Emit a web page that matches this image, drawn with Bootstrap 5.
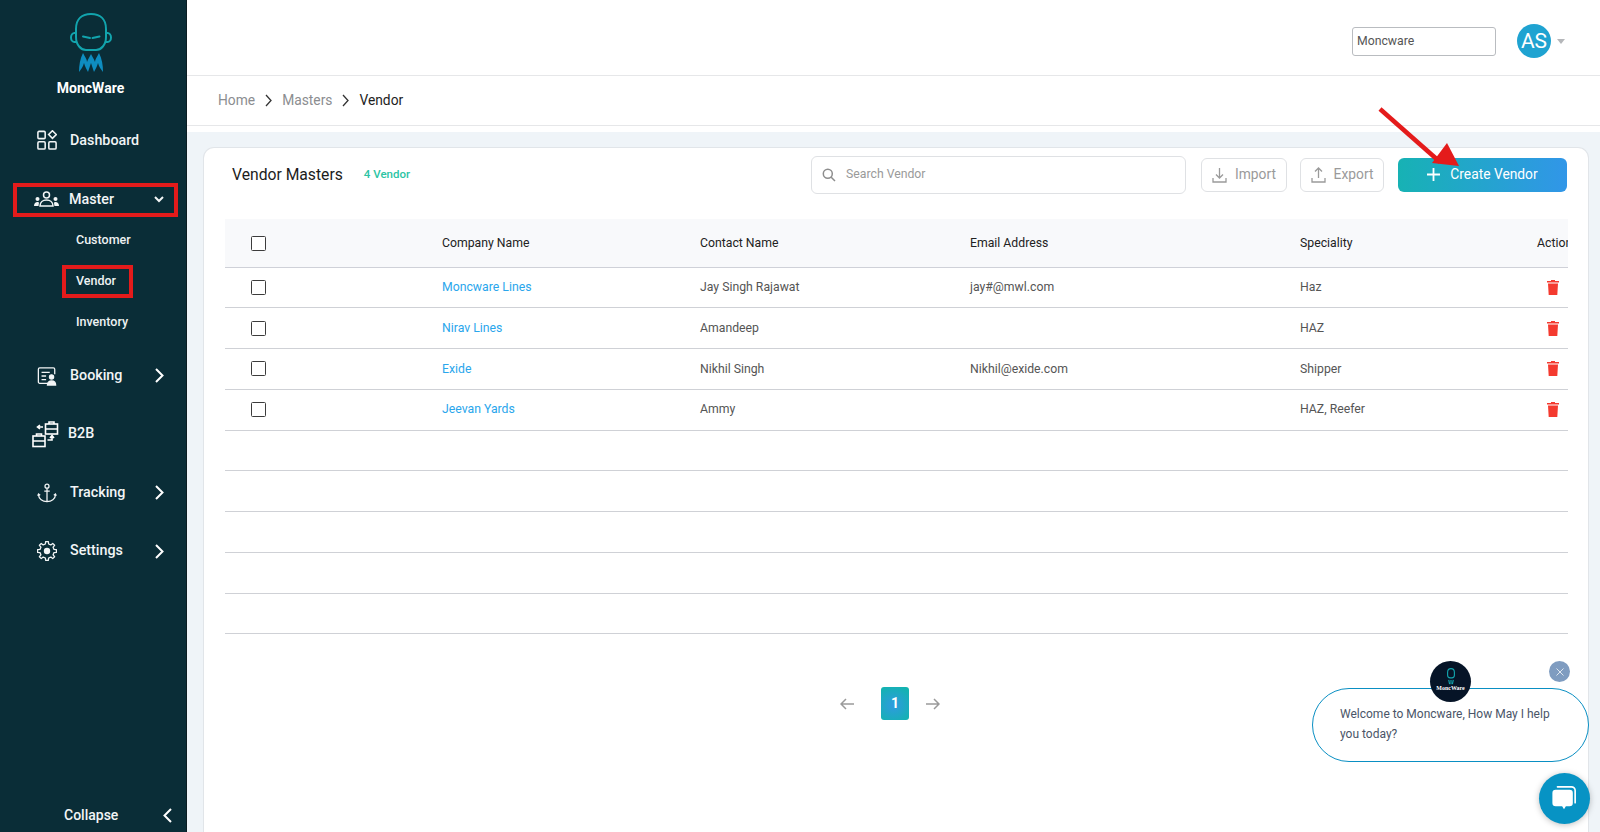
<!DOCTYPE html>
<html lang="en">
<head>
<meta charset="utf-8">
<title>Vendor Masters</title>
<link href="https://cdn.jsdelivr.net/npm/bootstrap@5.3.0/dist/css/bootstrap.min.css" rel="stylesheet">
<style>
html,body{height:832px;overflow:hidden}
body{font-family:Roboto,"Liberation Sans",sans-serif;background:#fff;color:#222}
.shell{height:832px}
.rail{width:187px;flex:none;background:#0a2d37;border-right:1px solid #0b1c22;color:#f2f5f6;height:832px}
.brand{height:111px;padding:13px 5px 0 0}
.brand svg{display:block;width:42px;height:60px}
.brand-name{font-size:14px;font-weight:700;line-height:18px;margin-top:6px;color:#fff}
.rail-item{height:58.5px;padding:0 22px 0 37px;font-size:14.3px;font-weight:500;color:#f2f5f6;text-decoration:none}
.rail-item .ico{width:20px;height:20px;flex:none;margin-right:13px}
.rail-item .chev{width:9px;height:15px;margin-left:auto;margin-right:0}
.rail-item.rail-b2b{padding-left:32px}
.rail-item.rail-b2b .ico{width:27px;height:27px;margin-right:9px}
.rail-open{height:34px;margin:13px 8px 0 13px;padding:0 10px 0 16px;border:4.5px solid #e41b1b;font-size:14.3px;font-weight:500;color:#f2f5f6;text-decoration:none}
.rail-open .ico{width:27px;height:18px;margin-right:9px}
.rail-open .chev{width:10px;height:7px;margin-left:auto}
.rail-subs{padding-top:3.5px;margin-bottom:4px}
.rail-sub{height:40.8px;padding-left:76px;font-size:12.5px;font-weight:500;color:#eef2f3;text-decoration:none}
.rail-sub-mark{margin-left:-14px;padding:0 13px 0 10px;height:33px;border:4.5px solid #e41b1b;line-height:24px}
.rail-foot{margin-top:auto;height:34px;padding:0 14px 0 64px;font-size:14px;font-weight:500;color:#f2f5f6}
.rail-foot svg{width:9px;height:15px;margin-left:auto}
.main-col{min-width:0;height:832px}
.topbar{height:76px;border-bottom:1px solid #e6e7e9;padding:7px 35px 0 0}
.org-input{width:144px;height:29px;font-size:12.25px;padding:0 4px;border:1px solid #b9bcc0;border-radius:3px;color:#555}
.who{width:34px;height:34px;background:#1fa3d1;color:#fff;font-size:21px;line-height:34px;margin-left:21px}
.who-caret{width:0;height:0;border:4.5px solid transparent;border-top:5px solid #b5b7ba;border-bottom:0;margin-left:6px}
.crumbs{height:50px;border-bottom:1px solid #e6e7e9;padding-left:31px;font-size:13.8px;color:#8b8d90}
.crumbs svg{width:7px;height:13px;margin:0 10px}
.crumbs b{font-weight:400;color:#1e1e1e}
.stage{background:#eff4f8;margin-top:6px;padding:15px 11px 0 16px;height:700px}
.sheet{background:#fff;border:1px solid #e1e5e9;border-bottom:0;border-radius:11px 11px 0 0;height:686px;padding:3px 21px 0}
.sheet-head{height:47px;margin-left:7px}
.sheet-title{font-size:15.7px;font-weight:400;color:#1c1c1c}
.sheet-count{font-size:11.5px;font-weight:500;color:#2cc4a4;margin-left:21px}
.find{width:375px;height:38px;border:1px solid #dfe1e4;border-radius:6px;padding:0 10px;margin-left:auto;margin-right:15px}
.find svg{width:14px;height:14px;flex:none;margin-right:8px}
.find input{border:0;outline:0;font-size:12.25px;width:100%;background:transparent}
.find input::placeholder{color:#9a9a9a}
.ghost{height:34px;border:1px solid #dfe1e4;border-radius:6px;font-size:13.8px;color:#9a9a9a;background:#fff;padding:0;margin-right:13px}
.ghost svg{width:15px;height:16px;margin-right:8px}
.ghost-a{width:86px}
.ghost-b{width:84px;margin-right:14px}
.make{width:169px;height:34px;border:0;border-radius:6px;color:#fff;font-size:13.8px;background:linear-gradient(90deg,#17b2b4,#3196e8)}
.make svg{width:13px;height:13px;margin-right:10px}
.grid-wrap{margin-top:21px;overflow:hidden;width:1343px}
.vtable{table-layout:fixed;width:1343px;margin:0;font-size:12.25px;--bs-table-bg:transparent}
.vtable th{background:#f8f9fb;height:48px;font-weight:400;font-size:12.25px;color:#222;vertical-align:middle;padding:1px 0 0;border-bottom:1px solid #cfd1d8;white-space:nowrap}
.vtable td{height:40.75px;padding:0;vertical-align:middle;color:#555;border-bottom:1px solid #cfd1d6}
.vtable a{color:#2aa6ec;text-decoration:none}
.cell-check{padding-left:26px!important}
.form-check-input.box{width:15px;height:15px;margin:0;display:block;border:1.6px solid #3c3c3c;border-radius:1.5px;box-shadow:none}
.bin{width:12px;height:15px;display:block;margin-left:10px}
.pager{margin-top:53px;margin-right:12px}
.pager svg{width:14px;height:12px}
.pg{width:28px;height:33px;border-radius:3px;font-size:14px;font-weight:700;color:#fff;background:radial-gradient(circle at 45% 55%,#2f9ae0 0,#13b3b0 85%);margin:0 17px 0 27px}
.pointer{position:absolute;left:1370px;top:100px;width:100px;height:75px}
.hello{position:absolute;left:1312px;top:688px;width:277px;height:74px;border:1.5px solid #0a8fc3;border-radius:37px;background:#fff;padding:15px 27px 0;font-size:12px;line-height:20px;color:#4a5568}
.hello-logo{position:absolute;left:1430px;top:661px;width:41px;height:41px;background:#061427;color:#fff;font-family:"Liberation Serif",serif;font-weight:700;font-size:6px;line-height:6px}
.hello-logo svg{width:12px;height:17px;margin-top:7px}
.hello-x{position:absolute;left:1549px;top:661px;width:21px;height:21px;background:#7f9cc0}
.hello-x svg{width:8px;height:8px}
.fab{position:absolute;left:1539px;top:773px;width:51px;height:51px;background:#0793c4;box-shadow:0 1px 6px rgba(0,0,0,.25)}
.fab svg{width:26px;height:26px;margin:-2px 2px 0 0}
</style>
</head>
<body>
<div class="shell d-flex">
  <nav class="rail d-flex flex-column">
    <div class="brand d-flex flex-column align-items-center">
      <svg viewBox="0 0 42 60" fill="none">
        <path d="M6 24V16C6 6 12 1 21 1s15 5 15 15v8c0 8-5 13-10 13H16C11 37 6 32 6 24z" stroke="#12a4ad" stroke-width="2"/>
        <path d="M6 20H4.500a3.500 4.500 0 0 0 0 9H7M36 20h1.500a3.500 4.500 0 0 1 0 9H35" stroke="#12a4ad" stroke-width="2"/>
        <path d="M13 23.500l7 1.500M29.500 23.500l-7 1.500" stroke="#12a4ad" stroke-width="2" stroke-linecap="round"/>
        <path d="M9 59C9 52 10 46 13 40c2 4 4 6 4 9 1-3 3-6 4-8 1 2 3 5 4 8 0-3 2-5 4-9 3 6 4 12 4 19-2-3-4-5-5-9-1 4-3 7-4 9-1-3-2-6-3-9-1 3-2 6-3 9-1-2-3-5-4-9-1 4-3 6-5 9z" fill="#0e8dc0"/>
      </svg>
      <div class="brand-name">MoncWare</div>
    </div>
    <a class="rail-item d-flex align-items-center" href="#">
      <svg class="ico" viewBox="0 0 22 22" fill="none" stroke="#f2f5f6" stroke-width="1.700"><rect x="1" y="1.500" width="8" height="8" rx="1.200"/><rect x="1" y="13" width="8" height="8" rx="1.200"/><rect x="13" y="13" width="8" height="8" rx="1.200"/><path d="M17 .8l4.200 4.200-4.200 4.200L12.800 5z"/></svg>
      Dashboard
    </a>
    <a class="rail-open d-flex align-items-center" href="#">
      <svg class="ico" viewBox="0 0 27 18" fill="#f2f5f6"><circle cx="13.500" cy="4" r="3" fill="none" stroke="#f2f5f6" stroke-width="1.500"/><path d="M7 15c0-4 3-6 6.500-6s6.500 2 6.500 6z" fill="none" stroke="#f2f5f6" stroke-width="1.500"/><circle cx="4.500" cy="8" r="2"/><path d="M1 15c0-2.500 1.500-4 3.500-4S6 12 5.500 15z"/><circle cx="22.500" cy="8" r="2"/><path d="M26 15c0-2.500-1.500-4-3.500-4S21 12 21.500 15z"/></svg>
      Master
      <svg class="chev" viewBox="0 0 10 7" fill="none" stroke="#f2f5f6" stroke-width="2"><path d="M1 1l4 4 4-4"/></svg>
    </a>
    <div class="rail-subs d-flex flex-column">
      <a class="rail-sub d-flex align-items-center" href="#">Customer</a>
      <a class="rail-sub d-flex align-items-center" href="#"><span class="rail-sub-mark">Vendor</span></a>
      <a class="rail-sub d-flex align-items-center" href="#">Inventory</a>
    </div>
    <a class="rail-item d-flex align-items-center" href="#">
      <svg class="ico" viewBox="0 0 22 22" fill="none" stroke="#f2f5f6" stroke-width="1.400"><path d="M12 19H3a1.500 1.500 0 0 1-1.500-1.500v-14A1.500 1.500 0 0 1 3 2h15a1.500 1.500 0 0 1 1.500 1.500V9"/><path d="M5 7h9M5 11h5M5 15h5"/><circle cx="16" cy="12" r="2.300" fill="#f2f5f6"/><path d="M11.500 21c0-3 2-4.500 4.500-4.500s4.500 1.500 4.500 4.500z" fill="#f2f5f6"/></svg>
      Booking
      <svg class="chev" viewBox="0 0 9 15" fill="none" stroke="#fff" stroke-width="2"><path d="M1 1l6.500 6.500L1 14"/></svg>
    </a>
    <a class="rail-item rail-b2b d-flex align-items-center" href="#">
      <svg class="ico" viewBox="0 0 27 27" fill="none" stroke="#fff" stroke-width="1.600"><rect x="13.500" y="3" width="12" height="10" fill="#0a2d37"/><path d="M17 3V1h5v2M13.500 8h12"/><rect x="1" y="15" width="12" height="10.500" fill="#0a2d37"/><path d="M4.500 15v-2h5v2M1 20h12"/><path d="M11 6H6M8 4L5.500 6 8 8M15.500 19H20v-4M18 17l2-2.500 2 2.500"/></svg>
      B2B
    </a>
    <a class="rail-item d-flex align-items-center" href="#">
      <svg class="ico" viewBox="0 0 22 22" fill="none" stroke="#f2f5f6" stroke-width="1.400"><circle cx="11" cy="3.500" r="2.200"/><path d="M11 5.700V20.500M8 9h6M1.500 12.500C2 17.500 6 20.500 11 20.500s9-3 9.500-8M.8 14l.9-2 1.800 1.400M21.200 14l-.9-2-1.800 1.400"/></svg>
      Tracking
      <svg class="chev" viewBox="0 0 9 15" fill="none" stroke="#fff" stroke-width="2"><path d="M1 1l6.500 6.500L1 14"/></svg>
    </a>
    <a class="rail-item d-flex align-items-center" href="#">
      <svg class="ico" viewBox="0 0 20 20" fill="none" stroke="#f2f5f6" stroke-width="1.300" stroke-linejoin="round"><path d="M8.380 2.990L8.680.59h2.640l.3 2.400 2.200.9 1.900-1.480 1.870 1.870-1.480 1.900.9 2.200 2.400.3v2.640l-2.400.3-.9 2.200 1.480 1.900-1.870 1.870-1.900-1.480-2.200.9-.3 2.400H8.680l-.3-2.400-2.200-.9-1.900 1.480-1.870-1.870 1.480-1.900-.9-2.200-2.400-.3V8.680l2.400-.3.9-2.200-1.480-1.900 1.870-1.870 1.900 1.480z"/><circle cx="10" cy="10" r="3.200" fill="#f2f5f6" stroke="none"/></svg>
      Settings
      <svg class="chev" viewBox="0 0 9 15" fill="none" stroke="#fff" stroke-width="2"><path d="M1 1l6.500 6.500L1 14"/></svg>
    </a>
    <div class="rail-foot d-flex align-items-center">
      Collapse
      <svg viewBox="0 0 9 15" fill="none" stroke="#fff" stroke-width="2"><path d="M8 1L1.500 7.500 8 14"/></svg>
    </div>
  </nav>

  <div class="main-col flex-grow-1 d-flex flex-column">
    <header class="topbar d-flex align-items-center justify-content-end">
      <input class="org-input" type="text" value="Moncware" aria-label="Organisation">
      <div class="who rounded-circle text-center">AS</div>
      <span class="who-caret"></span>
    </header>
    <div class="crumbs d-flex align-items-center">
      Home
      <svg viewBox="0 0 7 13" fill="none" stroke="#333" stroke-width="1.300"><path d="M1 1l5 5.500L1 12"/></svg>
      Masters
      <svg viewBox="0 0 7 13" fill="none" stroke="#333" stroke-width="1.300"><path d="M1 1l5 5.500L1 12"/></svg>
      <b>Vendor</b>
    </div>
    <main class="stage">
      <section class="sheet">
        <div class="sheet-head d-flex align-items-center">
          <span class="sheet-title">Vendor Masters</span>
          <span class="sheet-count">4 Vendor</span>
          <label class="find d-flex align-items-center">
            <svg viewBox="0 0 14 14" fill="none" stroke="#8d8d8d" stroke-width="1.500"><circle cx="5.800" cy="5.800" r="4.500"/><path d="M9.200 9.200L13 13"/></svg>
            <input type="text" placeholder="Search Vendor" aria-label="Search Vendor">
          </label>
          <button class="btn ghost ghost-a d-flex align-items-center justify-content-center">
            <svg viewBox="0 0 15 16" fill="none" stroke="#9a9a9a" stroke-width="1.300"><path d="M7.500 1v9.500M4 7.500l3.500 3.500L11 7.500M1 11v4h13v-4"/></svg>Import
          </button>
          <button class="btn ghost ghost-b d-flex align-items-center justify-content-center">
            <svg viewBox="0 0 15 16" fill="none" stroke="#9a9a9a" stroke-width="1.300"><path d="M7.500 11V1.500M4 4.500L7.500 1 11 4.500M1 11v4h13v-4"/></svg>Export
          </button>
          <button class="btn make d-flex align-items-center justify-content-center">
            <svg viewBox="0 0 13 13" fill="none" stroke="#fff" stroke-width="1.800"><path d="M6.500 0v13M0 6.500h13"/></svg>Create Vendor
          </button>
        </div>
        <div class="grid-wrap">
          <table class="table vtable">
            <colgroup><col style="width:217px"><col style="width:258px"><col style="width:270px"><col style="width:330px"><col style="width:237px"><col style="width:31px"></colgroup>
            <thead>
              <tr><th class="cell-check"><input class="form-check-input box" type="checkbox" aria-label="Select all"></th><th>Company Name</th><th>Contact Name</th><th>Email Address</th><th>Speciality</th><th>Action</th></tr>
            </thead>
            <tbody>
              <tr><td class="cell-check"><input class="form-check-input box" type="checkbox" aria-label="Select"></td><td><a href="#">Moncware Lines</a></td><td>Jay Singh Rajawat</td><td>jay#@mwl.com</td><td>Haz</td><td><svg class="bin" viewBox="0 0 12 15" fill="#f43a2f"><path d="M4 0h4v1h4v1.500H0V1h4zM1 3.500h10l-.7 11.500H1.700z"/></svg></td></tr>
              <tr><td class="cell-check"><input class="form-check-input box" type="checkbox" aria-label="Select"></td><td><a href="#">Nirav Lines</a></td><td>Amandeep</td><td></td><td>HAZ</td><td><svg class="bin" viewBox="0 0 12 15" fill="#f43a2f"><path d="M4 0h4v1h4v1.500H0V1h4zM1 3.500h10l-.7 11.500H1.700z"/></svg></td></tr>
              <tr><td class="cell-check"><input class="form-check-input box" type="checkbox" aria-label="Select"></td><td><a href="#">Exide</a></td><td>Nikhil Singh</td><td>Nikhil@exide.com</td><td>Shipper</td><td><svg class="bin" viewBox="0 0 12 15" fill="#f43a2f"><path d="M4 0h4v1h4v1.500H0V1h4zM1 3.500h10l-.7 11.500H1.700z"/></svg></td></tr>
              <tr><td class="cell-check"><input class="form-check-input box" type="checkbox" aria-label="Select"></td><td><a href="#">Jeevan Yards</a></td><td>Ammy</td><td></td><td>HAZ, Reefer</td><td><svg class="bin" viewBox="0 0 12 15" fill="#f43a2f"><path d="M4 0h4v1h4v1.500H0V1h4zM1 3.500h10l-.7 11.500H1.700z"/></svg></td></tr>
              <tr><td colspan="6"></td></tr>
              <tr><td colspan="6"></td></tr>
              <tr><td colspan="6"></td></tr>
              <tr><td colspan="6"></td></tr>
              <tr><td colspan="6"></td></tr>
            </tbody>
          </table>
        </div>
        <div class="pager d-flex align-items-center justify-content-center">
          <svg viewBox="0 0 14 12" fill="none" stroke="#9a9a9a" stroke-width="1.500"><path d="M14 6H1M6 1L1 6l5 5"/></svg>
          <span class="pg d-flex align-items-center justify-content-center">1</span>
          <svg viewBox="0 0 14 12" fill="none" stroke="#9a9a9a" stroke-width="1.500"><path d="M0 6h13M8 1l5 5-5 5"/></svg>
        </div>
      </section>
    </main>
  </div>
</div>

<svg class="pointer" viewBox="0 0 100 75"><path d="M10 9L70 62" stroke="#e41b1b" stroke-width="4.500" fill="none"/><path d="M77 43L62 63 89 66z" fill="#e41b1b"/></svg>
<div class="hello">Welcome to Moncware, How May I help you today?</div>
<div class="hello-logo rounded-circle d-flex flex-column align-items-center">
  <svg viewBox="0 0 42 60" fill="none" stroke="#12a4ad" stroke-width="4"><path d="M9 26V15C9 7 14 2 21 2s12 5 12 13v11c0 5-4 9-9 9h-6c-5 0-9-4-9-9z"/><path d="M13 42l3 15M21 42v15M29 42l-3 15"/></svg>
  <span>MoncWare</span>
</div>
<div class="hello-x rounded-circle d-flex align-items-center justify-content-center"><svg viewBox="0 0 8 8" stroke="#dfe6ef" stroke-width="1"><path d="M.5.5l7 7M7.500.5l-7 7"/></svg></div>
<div class="fab rounded-circle d-flex align-items-center justify-content-center">
  <svg viewBox="0 0 28 28"><path d="M7 2h15a4 4 0 0 1 4 4v13" fill="none" stroke="#fff" stroke-width="1.800" stroke-linecap="round"/><path d="M5 5h15a3.500 3.500 0 0 1 3.500 3.500v11a3.500 3.500 0 0 1-3.500 3.500h-4l-2 3-2-3H5a3.500 3.500 0 0 1-3.500-3.500v-11A3.500 3.500 0 0 1 5 5z" fill="#fff"/></svg>
</div>
<script src="https://cdn.jsdelivr.net/npm/bootstrap@5.3.0/dist/js/bootstrap.bundle.min.js"></script>
</body>
</html>
